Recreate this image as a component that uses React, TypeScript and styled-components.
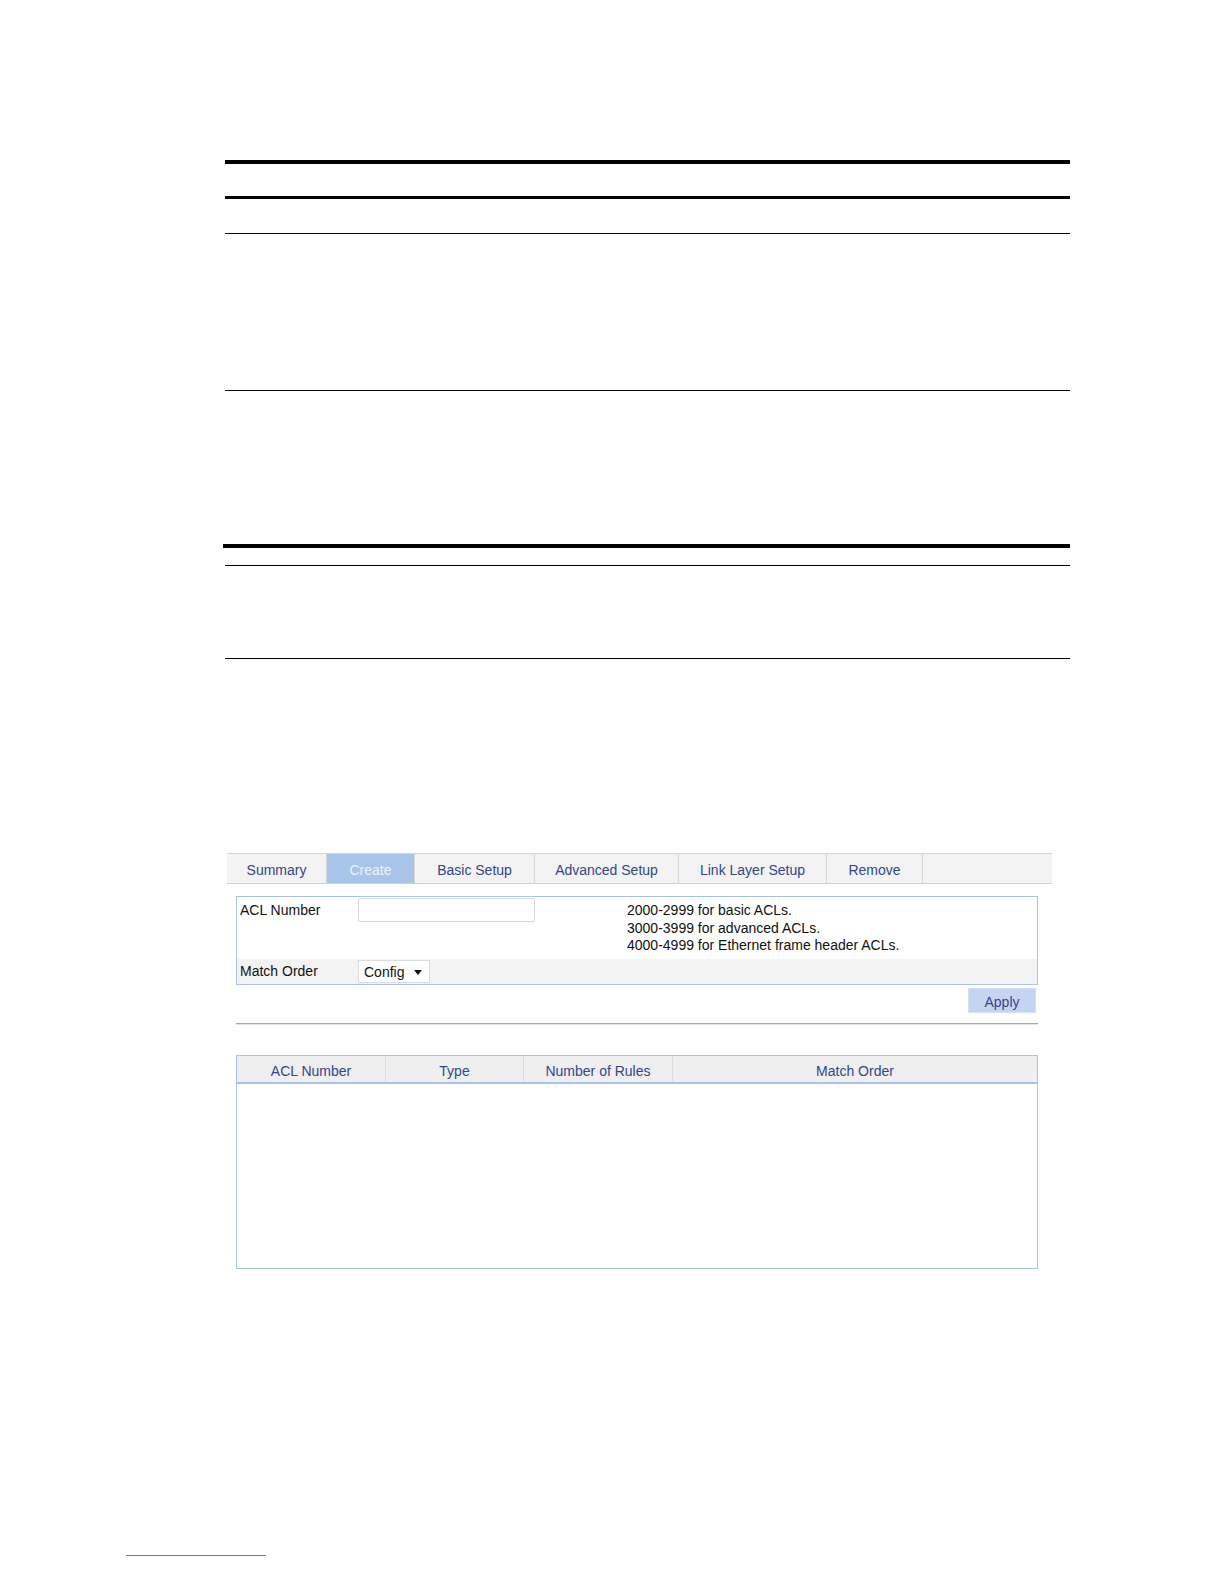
import React from 'react';
import styled, { createGlobalStyle } from 'styled-components';

const GlobalStyle = createGlobalStyle`
	html, body {
		margin: 0;
		padding: 0;
		background: #ffffff;
	}
	body {
		font-family: Arial, "Liberation Sans", sans-serif;
	}
`;

const tabs = [
	{ label: 'Summary', width: 100 },
	{ label: 'Create', width: 88, active: true },
	{ label: 'Basic Setup', width: 120 },
	{ label: 'Advanced Setup', width: 144 },
	{ label: 'Link Layer Setup', width: 148 },
	{ label: 'Remove', width: 96 },
];

// doc rules: thickness + gap above (px)
const rules = [
	{ h: 4, gap: 0 },
	{ h: 3, gap: 32 },
	{ h: 1, gap: 34 },
	{ h: 1, gap: 156 },
	{ h: 4, gap: 153, wide: true },
	{ h: 1, gap: 17 },
	{ h: 1, gap: 92 },
];

const columns = [
	{ label: 'ACL Number', width: 149 },
	{ label: 'Type', width: 138 },
	{ label: 'Number of Rules', width: 149 },
	{ label: 'Match Order', width: 0 },
];

function App() {
	return (
		<Page>
			<GlobalStyle />
			<RuleStack>
				{rules.map((r, i) => (
					<Rule key={i} $h={r.h} $gap={r.gap} $wide={r.wide} />
				))}
			</RuleStack>

			<Screen>
				<TabBar>
					{tabs.map((t) => (
						<Tab key={t.label} $w={t.width} $active={t.active}>
							{t.label}
						</Tab>
					))}
					<TabFill />
				</TabBar>

				<FormBox>
					<FormRow $h={62}>
						<Label>ACL Number</Label>
						<Field>
							<TextInput />
						</Field>
						<Hint>
							<div>2000-2999 for basic ACLs.</div>
							<div>3000-3999 for advanced ACLs.</div>
							<div>4000-4999 for Ethernet frame header ACLs.</div>
						</Hint>
					</FormRow>
					<FormRow $h={25} $alt>
						<Label $center>Match Order</Label>
						<Field>
							<Select>
								Config
								<Caret />
							</Select>
						</Field>
					</FormRow>
				</FormBox>

				<ButtonRow>
					<ApplyButton>Apply</ApplyButton>
				</ButtonRow>

				<Divider />

				<Table>
					<HeaderRow>
						{columns.map((c) => (
							<HeaderCell key={c.label} $w={c.width}>
								{c.label}
							</HeaderCell>
						))}
					</HeaderRow>
					<TableBody />
				</Table>
			</Screen>

			<Footnote />
		</Page>
	);
}

const Page = styled.div`
	width: 1224px;
	height: 1584px;
	position: relative;
	overflow: hidden;
	display: flex;
	flex-direction: column;
	background: #fff;
`;

const RuleStack = styled.div`
	display: flex;
	flex-direction: column;
	margin: 160px 0 0 225px;
	width: 845px;
`;

const Rule = styled.div<{ $h: number; $gap: number; $wide?: boolean }>`
	height: ${(p) => p.$h}px;
	margin-top: ${(p) => p.$gap}px;
	margin-left: ${(p) => (p.$wide ? -2 : 0)}px;
	background: #000;
`;

const Screen = styled.div`
	margin: 194px 0 0 227px;
	width: 825px;
	display: flex;
	flex-direction: column;
	font-size: 14px;
`;

const TabBar = styled.div`
	display: flex;
	height: 29px;
	border-top: 1px solid #d4d4d4;
	border-bottom: 1px solid #d0d0d0;
	background: #f3f3f3;
`;

const Tab = styled.div<{ $w: number; $active?: boolean }>`
	width: ${(p) => p.$w}px;
	box-sizing: border-box;
	display: flex;
	align-items: center;
	justify-content: center;
	padding-top: 3px;
	border-right: 1px solid #d6d6d6;
	background: ${(p) => (p.$active ? '#a9c4e9' : '#f3f3f3')};
	color: ${(p) => (p.$active ? '#eef3fb' : '#34468a')};
	font-size: 14px;
`;

const TabFill = styled.div`
	flex: 1;
`;

const FormBox = styled.div`
	margin: 12px 0 0 9px;
	width: 802px;
	box-sizing: border-box;
	border: 1px solid #a9c4e8;
	display: flex;
	flex-direction: column;
`;

const FormRow = styled.div<{ $h: number; $alt?: boolean }>`
	display: flex;
	height: ${(p) => p.$h}px;
	background: ${(p) => (p.$alt ? '#f3f3f3' : '#fff')};
	color: #111;
`;

const Label = styled.div<{ $center?: boolean }>`
	width: 118px;
	padding: ${(p) => (p.$center ? '4px' : '5px')} 0 0 3px;
`;

const Field = styled.div`
	width: 269px;
	padding-top: 1px;
`;

const TextInput = styled.div`
	width: 177px;
	height: 24px;
	box-sizing: border-box;
	border: 1px solid #d8d8d8;
	border-radius: 2px;
	background: #fff;
`;

const Select = styled.div`
	width: 72px;
	height: 23px;
	box-sizing: border-box;
	border: 1px solid #dcdcdc;
	background: #fff;
	display: flex;
	align-items: center;
	justify-content: space-between;
	padding: 1px 7px 0 5px;
	margin-top: 0;
	color: #111;
`;

const Caret = styled.span`
	width: 0;
	height: 0;
	border-left: 4px solid transparent;
	border-right: 4px solid transparent;
	border-top: 5px solid #111;
`;

const Hint = styled.div`
	padding-top: 5px;
	line-height: 17.5px;
	color: #111;
`;

const ButtonRow = styled.div`
	display: flex;
	justify-content: flex-end;
	width: 809px;
	margin-top: 3px;
`;

const ApplyButton = styled.div`
	width: 68px;
	height: 25px;
	box-sizing: border-box;
	background: #c5d5f1;
	border: 1px solid #d6e0f2;
	color: #34468a;
	display: flex;
	align-items: center;
	justify-content: center;
	padding-top: 3px;
`;

const Divider = styled.div`
	margin: 10px 0 0 9px;
	width: 802px;
	height: 1px;
	background: #a8a8a8;
	border-bottom: 1px solid #e4e4e4;
`;

const Table = styled.div`
	margin: 30px 0 0 9px;
	width: 802px;
	height: 214px;
	box-sizing: border-box;
	border: 1px solid #a9c4e8;
	display: flex;
	flex-direction: column;
`;

const HeaderRow = styled.div`
	display: flex;
	height: 26px;
	background: #efefef;
	border-bottom: 2px solid #a9c4e8;
`;

const HeaderCell = styled.div<{ $w: number }>`
	${(p) => (p.$w ? `width: ${p.$w}px;` : 'flex: 1;')}
	box-sizing: border-box;
	display: flex;
	align-items: center;
	justify-content: center;
	padding-top: 4px;
	border-right: 1px solid #dcdcdc;
	color: #34468a;
	&:last-child {
		border-right: none;
	}
`;

const TableBody = styled.div`
	flex: 1;
	background: #fff;
`;

const Footnote = styled.div`
	margin: 286px 0 0 126px;
	width: 140px;
	height: 1px;
	background: #777;
`;

export default App;
